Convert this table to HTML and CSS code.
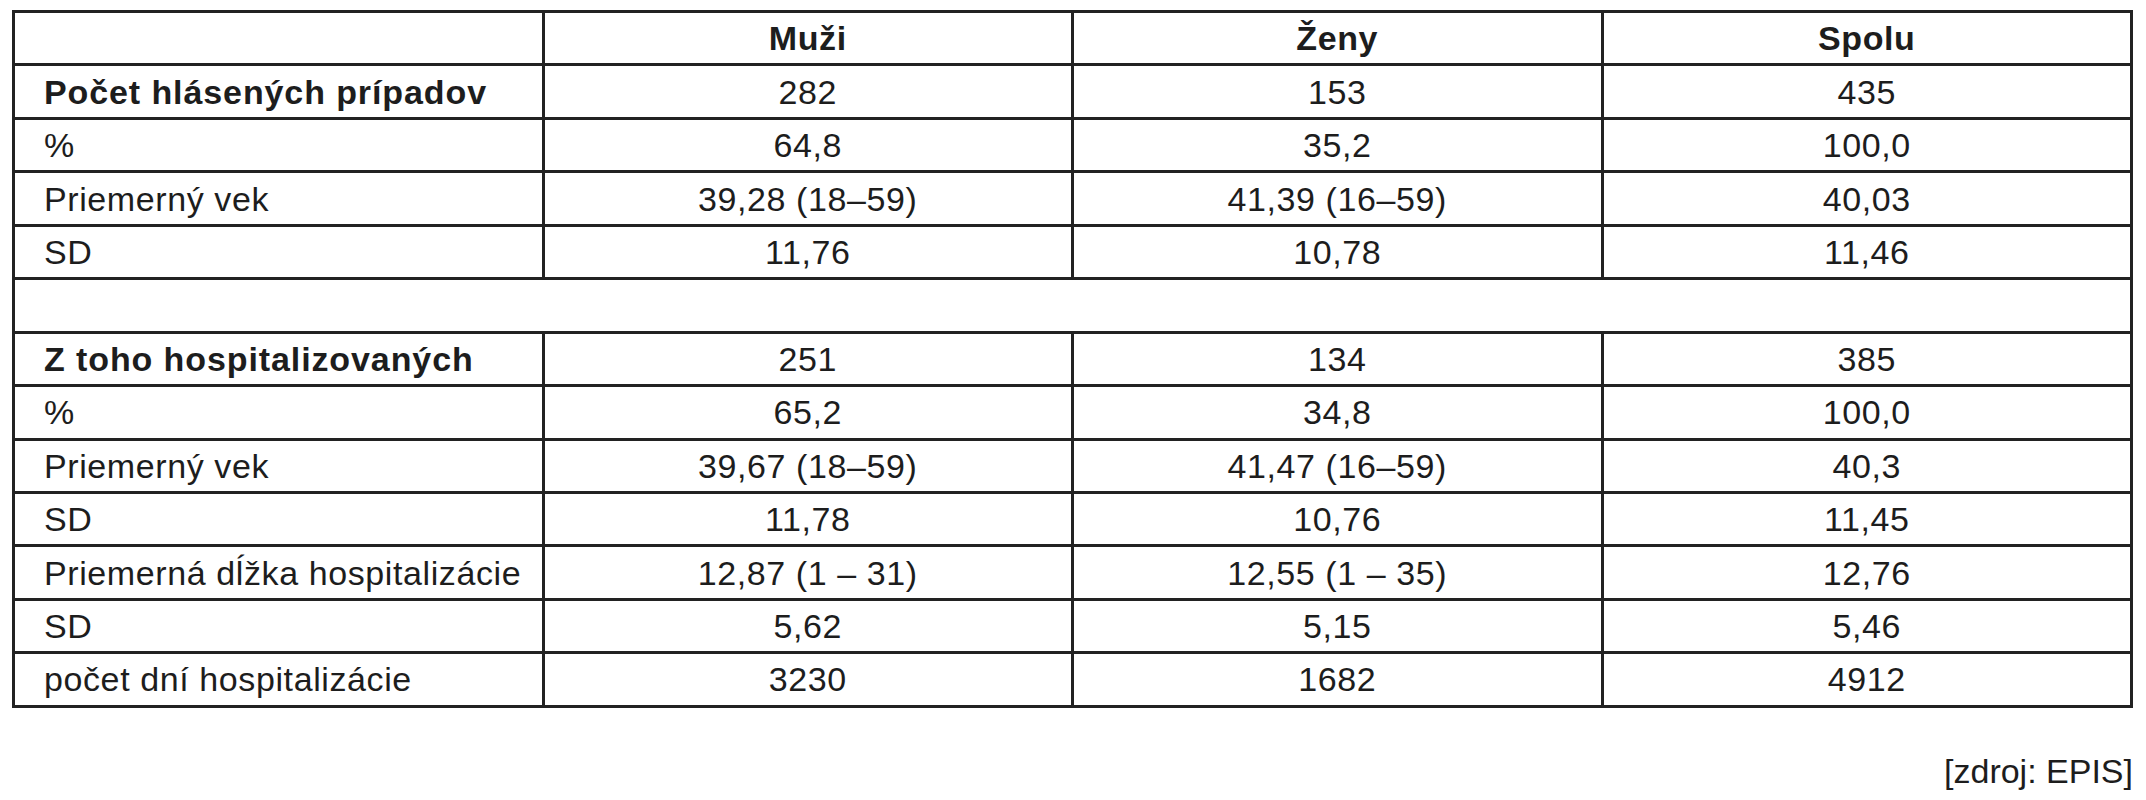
FILE: index.html
```html
<!DOCTYPE html>
<html lang="sk">
<head>
<meta charset="utf-8">
<title>Tabuľka</title>
<link rel="stylesheet" href="styles.css">
</head>
<body>
<div class="page">
  <table class="data">
    <colgroup>
      <col class="c-label"><col class="c-val"><col class="c-val"><col class="c-val">
    </colgroup>
    <tr class="head">
      <th></th><th>Muži</th><th>Ženy</th><th>Spolu</th>
    </tr>
    <tr>
      <td class="label strong">Počet hlásených prípadov</td><td>282</td><td>153</td><td>435</td>
    </tr>
    <tr>
      <td class="label">%</td><td>64,8</td><td>35,2</td><td>100,0</td>
    </tr>
    <tr>
      <td class="label">Priemerný vek</td><td>39,28 (18–59)</td><td>41,39 (16–59)</td><td>40,03</td>
    </tr>
    <tr>
      <td class="label">SD</td><td>11,76</td><td>10,78</td><td>11,46</td>
    </tr>
    <tr>
      <td class="blank" colspan="4"></td>
    </tr>
    <tr>
      <td class="label strong">Z toho hospitalizovaných</td><td>251</td><td>134</td><td>385</td>
    </tr>
    <tr>
      <td class="label">%</td><td>65,2</td><td>34,8</td><td>100,0</td>
    </tr>
    <tr>
      <td class="label">Priemerný vek</td><td>39,67 (18–59)</td><td>41,47 (16–59)</td><td>40,3</td>
    </tr>
    <tr>
      <td class="label">SD</td><td>11,78</td><td>10,76</td><td>11,45</td>
    </tr>
    <tr>
      <td class="label">Priemerná dĺžka hospitalizácie</td><td>12,87 (1 – 31)</td><td>12,55 (1 – 35)</td><td>12,76</td>
    </tr>
    <tr>
      <td class="label">SD</td><td>5,62</td><td>5,15</td><td>5,46</td>
    </tr>
    <tr>
      <td class="label">počet dní hospitalizácie</td><td>3230</td><td>1682</td><td>4912</td>
    </tr>
  </table>
  <p class="source">[zdroj: EPIS]</p>
</div>
</body>
</html>
```

FILE: styles.css
```css
html, body {
  margin: 0;
  padding: 0;
  background: #ffffff;
}

body {
  font-family: "Liberation Sans", Arial, Helvetica, sans-serif;
  color: #1d1d1d;
}

.page {
  padding: 10px 0 0 12px;
  width: 2121px;
}

.data {
  border-collapse: collapse;
  table-layout: fixed;
  width: 2121px;
}

.c-label,
.c-val {
  width: 25%;
}

.data tr {
  height: 53.44px;
}

.data th,
.data td {
  border: 3px solid #222222;
  padding: 0;
  font-size: 34px;
  letter-spacing: 0.6px;
  line-height: 1;
  text-align: center;
  vertical-align: middle;
  white-space: nowrap;
}

.data th {
  font-weight: bold;
}

.data td.label {
  text-align: left;
  padding-left: 29px;
}

.data td.strong {
  font-weight: bold;
  letter-spacing: 0.9px;
}

.source {
  margin: 44px 0 0 0;
  text-align: right;
  font-size: 34px;
  line-height: 39px;
  color: #1d1d1d;
}
```
